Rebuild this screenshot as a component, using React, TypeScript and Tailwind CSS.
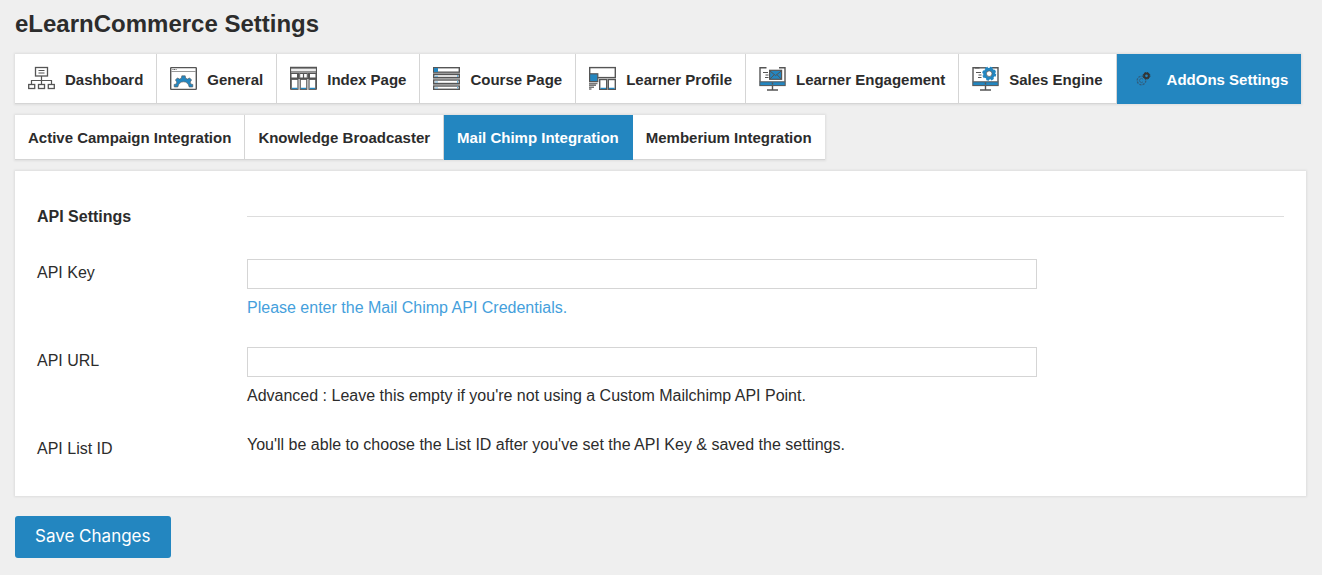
import type { ReactNode } from "react";

const ink = "#555555";
const blue = "#2386c0";

function Icon({ children }: { children: ReactNode }) {
  return (
    <svg width="27" height="26" viewBox="0 0 27 26" fill="none" stroke={ink} className="shrink-0" aria-hidden="true">
      {children}
    </svg>
  );
}

const DashboardIcon = () => (
  <Icon>
    <rect x="7.5" y="1.5" width="12" height="8.5" strokeWidth="1.3" />
    <path d="M10.5 4.500h6M10.5 7h6" strokeWidth="1.2" />
    <path d="M13.5 10v8M3.5 18v-3.500h20v3.500" strokeWidth="1.2" />
    <rect x=".7" y="18.5" width="6" height="4" strokeWidth="1.3" />
    <rect x="10.5" y="18.5" width="6" height="4" strokeWidth="1.3" />
    <rect x="20.3" y="18.5" width="6" height="4" strokeWidth="1.3" />
  </Icon>
);

const GeneralIcon = () => (
  <Icon>
    <rect x=".7" y="1.6" width="25.6" height="21.8" rx=".6" strokeWidth="1.4" />
    <path d="M1 5.500h25" stroke="#999" />
    <path d="M2.500 3.500h4" strokeDasharray="1 .6" />
    <path
      d="M4.300 21l-.2-2.500 2.200-.6.5-1.900-1.400-2 2-2.100 2.100 1.200 1.800-.8.5-2.500h3.400l.5 2.500 1.800.8 2.100-1.200 2 2.100-1.400 2 .5 1.900 2.200.6-.2 2.500h-3.500c-.6-3.400-2.800-5.200-5.700-5.200s-5.100 1.800-5.700 5.200z"
      fill={blue}
      strokeWidth=".6"
    />
  </Icon>
);

const IndexIcon = () => (
  <Icon>
    <rect x=".5" y="1.500" width="26" height="4.500" fill="#eee" strokeWidth="1.200" />
    <path d="M0 1.700h27" strokeWidth="1.700" />
    <rect x="1" y="7.500" width="6.500" height="4.500" />
    <rect x="9.700" y="7.500" width="7.600" height="4.500" />
    <rect x="19.500" y="7.500" width="6.500" height="4.500" />
    <path d="M.5 5.500v18M26.500 5.500v18M13.500 7v5M0 12.500h27M8.500 7v5M18.500 7v5" strokeWidth="1.200" />
    <rect x="1.200" y="13.300" width="6.800" height="10" strokeWidth="1.200" />
    <rect x="10.200" y="13.300" width="6.600" height="10" strokeWidth="1.200" />
    <rect x="19" y="13.300" width="6.800" height="10" strokeWidth="1.200" />
    <path d="M2 22.300h5.500M11 22.300h5M19.800 22.300H25" stroke={blue} strokeWidth="1.300" />
  </Icon>
);

const CourseIcon = () => (
  <Icon>
    <rect x=".700" y="1.700" width="25.600" height="4.500" strokeWidth="1.400" />
    <rect x="1" y="2" width="4" height="4" fill={blue} stroke="none" />
    <rect x=".700" y="8.500" width="25.600" height="3" strokeWidth="1.400" />
    <rect x=".700" y="14" width="25.600" height="3.500" strokeWidth="1.400" />
    <rect x=".700" y="20" width="25.600" height="3.300" strokeWidth="1.400" />
    <path d="M0 7.300h27M0 12.800h27M0 18.700h27" stroke="#888" strokeWidth="1" />
    <path d="M2 10.300h3M2 16h3M2 22h3M24.500 9v2M24.500 14.500v2.500M24.500 20.500v2" stroke="#6aaed6" />
  </Icon>
);

const ProfileIcon = () => (
  <Icon>
    <rect x=".700" y="1.600" width="25.600" height="10" strokeWidth="1.400" />
    <rect x=".600" y="7.800" width="8.200" height="7.800" fill={blue} strokeWidth="1.200" />
    <path d="M0 17.500h8.500M0 19.300h7M0 21.300h5M0 23h2.500" strokeWidth="1.600" stroke="#777" />
    <rect x="10.700" y="13.500" width="7" height="9.800" strokeWidth="1.400" />
    <rect x="19.300" y="13.500" width="7" height="9.800" strokeWidth="1.400" />
    <path d="M11.500 22.300h5.500M20 22.300h5.500" stroke={blue} strokeWidth="1.200" />
  </Icon>
);

const Monitor = () => (
  <>
    <path d="M7.500 1.800H1v14M20 1.800h6v14" strokeWidth="1.400" />
    <rect x=".800" y="15.800" width="25.400" height="3.800" fill={blue} strokeWidth="1" />
    <path d="M13.500 16.500v2M13.500 20v4M8 24h11" strokeWidth="1.400" />
    <path d="M4 6.500h5M6.500 9h3M6 11.500h3.500" strokeWidth="1" />
  </>
);

const EngagementIcon = () => (
  <Icon>
    <Monitor />
    <rect x="10.600" y="4.300" width="12" height="9" fill={blue} strokeWidth="1.200" />
    <path d="M11 5l5.600 4.600L22.200 5M11 13l4.200-4.300M22.200 13L18 8.700" strokeWidth="1" />
  </Icon>
);

const SalesIcon = () => (
  <Icon>
    <Monitor />
    <path d="M3 1.800h11" strokeWidth="1.400" />
    <circle cx="17.200" cy="7.700" r="5.900" fill={blue} stroke={blue} strokeWidth="2.200" strokeDasharray="2.600 2.030" />
    <circle cx="17.200" cy="7.700" r="5.300" fill={blue} stroke={blue} strokeWidth=".800" />
    <circle cx="17.200" cy="7.700" r="2.800" fill="#fff" strokeWidth=".700" />
  </Icon>
);

const AddonsIcon = () => (
  <Icon>
    <circle cx="11.500" cy="14.500" r="4.300" stroke="#315d7d" strokeWidth="1.300" strokeDasharray="2.200 1.100" />
    <path d="M13 13.200a2 2 0 1 0 0 2.600" stroke="#315d7d" strokeWidth=".900" />
    <circle cx="16.500" cy="9.800" r="2.300" stroke="#333" strokeWidth="1.900" />
    <circle cx="16.500" cy="9.800" r="3.400" stroke="#333" strokeWidth="1" strokeDasharray="1.550 1.120" />
  </Icon>
);

const tabs = [
  { label: "Dashboard", icon: <DashboardIcon /> },
  { label: "General", icon: <GeneralIcon /> },
  { label: "Index Page", icon: <IndexIcon /> },
  { label: "Course Page", icon: <CourseIcon /> },
  { label: "Learner Profile", icon: <ProfileIcon /> },
  { label: "Learner Engagement", icon: <EngagementIcon /> },
  { label: "Sales Engine", icon: <SalesIcon /> },
  { label: "AddOns Settings", icon: <AddonsIcon />, active: true },
];

const subTabs = [
  { label: "Active Campaign Integration" },
  { label: "Knowledge Broadcaster" },
  { label: "Mail Chimp Integration", active: true },
  { label: "Memberium Integration" },
];

const box = "bg-white shadow-[0_0_2px_1px_#dedede]";
const tabBase = "flex items-center gap-[10px] whitespace-nowrap border-b px-[13px] text-[15px] font-bold";
const tabIdle = "border-r border-[#d5d5d5] text-[#2c2c2c] last:border-r-0";
const tabActive = "border-r border-[#2386c0] bg-[#2386c0] text-white last:border-r-0";
const inputClass = "block h-[30px] w-full max-w-[790px] border border-[#d5d5d5] bg-white px-2 text-base outline-none";

export default function App() {
  return (
    <main className="min-h-screen bg-[#efefef] pr-4 pb-4 pl-[15px] font-['Liberation_Sans',Arial,sans-serif] text-base text-[#2c2c2c]">
      <h1 className="pt-2 pb-[14px] text-2xl leading-8 font-bold">eLearnCommerce Settings</h1>

      <nav aria-label="Settings" className={`${box} flex h-[50px] w-fit`}>
        {tabs.map((t) => (
          <a key={t.label} href="#" className={`${tabBase} ${t.active ? tabActive : tabIdle}`}>
            {t.icon}
            <span className="pt-[3px]">{t.label}</span>
          </a>
        ))}
      </nav>

      <nav aria-label="Integrations" className={`${box} mt-[11px] flex h-[45px] w-fit`}>
        {subTabs.map((t) => (
          <a key={t.label} href="#" className={`${tabBase} ${t.active ? tabActive : tabIdle}`}>
            <span className="pt-[3px]">{t.label}</span>
          </a>
        ))}
      </nav>

      <form onSubmit={(e) => e.preventDefault()}>
        <section className={`${box} mt-[11px] px-[22px] pt-[34px] pb-[35px]`}>
          <div className="flex items-center">
            <h2 className="w-[210px] shrink-0 leading-6 font-bold">API Settings</h2>
            <hr className="mb-px flex-1 border-[#dddddd]" />
          </div>

          <div className="mt-[30px] flex">
            <label htmlFor="api-key" className="w-[210px] shrink-0 pt-[2px] leading-6">API Key</label>
            <div className="flex-1">
              <input id="api-key" type="text" className={inputClass} />
              <p className="mt-[7px] leading-6 text-[#459fdc]">Please enter the Mail Chimp API Credentials.</p>
            </div>
          </div>

          <div className="mt-[27px] flex">
            <label htmlFor="api-url" className="w-[210px] shrink-0 pt-[2px] leading-6">API URL</label>
            <div className="flex-1">
              <input id="api-url" type="text" className={inputClass} />
              <p className="mt-[7px] leading-6">Advanced : Leave this empty if you're not using a Custom Mailchimp API Point.</p>
            </div>
          </div>

          <div className="mt-[25px] flex">
            <div className="w-[210px] shrink-0 pt-1 leading-6">API List ID</div>
            <p className="flex-1 leading-6">You'll be able to choose the List ID after you've set the API Key &amp; saved the settings.</p>
          </div>
        </section>

        <button type="submit" className="mt-5 h-[42px] rounded-[3px] bg-[#2386c0] px-5 font-['Inter',sans-serif] text-[17px] text-white">
          Save Changes
        </button>
      </form>
    </main>
  );
}
